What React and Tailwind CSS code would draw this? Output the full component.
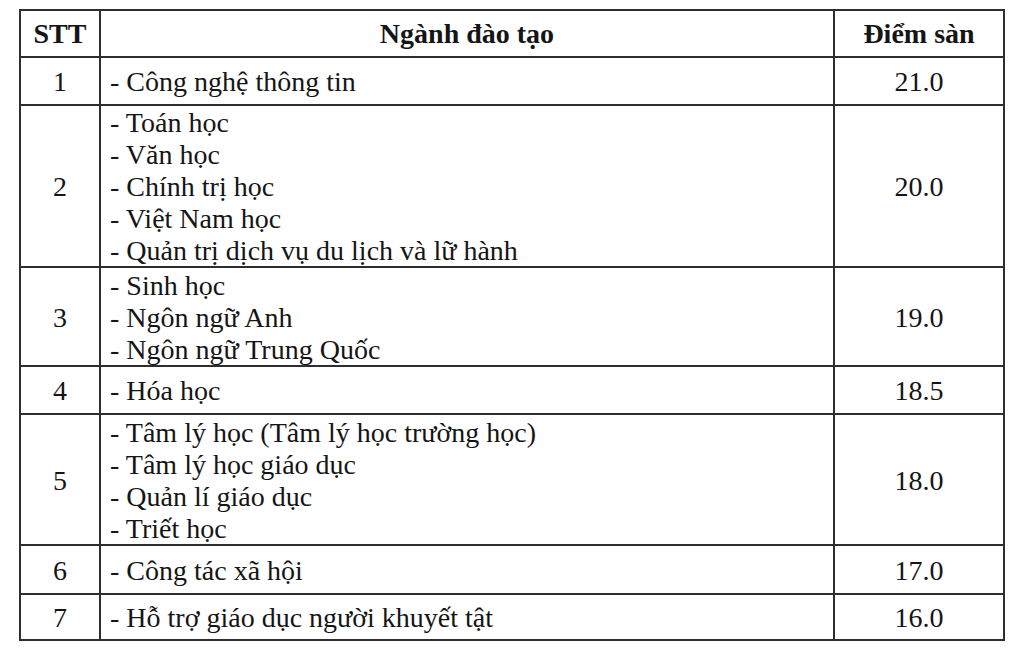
const rows = [
  { stt: "1", items: ["Công nghệ thông tin"], score: "21.0", h: "h-[48px]" },
  {
    stt: "2",
    items: ["Toán học", "Văn học", "Chính trị học", "Việt Nam học", "Quản trị dịch vụ du lịch và lữ hành"],
    score: "20.0",
    h: "h-[162px]",
  },
  { stt: "3", items: ["Sinh học", "Ngôn ngữ Anh", "Ngôn ngữ Trung Quốc"], score: "19.0", h: "h-[99px]" },
  { stt: "4", items: ["Hóa học"], score: "18.5", h: "h-[48px]" },
  {
    stt: "5",
    items: ["Tâm lý học (Tâm lý học trường học)", "Tâm lý học giáo dục", "Quản lí giáo dục", "Triết học"],
    score: "18.0",
    h: "h-[131px]",
  },
  { stt: "6", items: ["Công tác xã hội"], score: "17.0", h: "h-[49px]" },
  { stt: "7", items: ["Hỗ trợ giáo dục người khuyết tật"], score: "16.0", h: "h-[46px]" },
];

export default function App() {
  return (
    <div className="w-[1020px] h-[648px] bg-white pt-[9px] pl-[19px] font-[family-name:Liberation_Serif,serif] text-[28px] leading-[32px] text-[#151515]">
      <div className="w-[986px] border-2 border-[#2e2e2e]">
        {/* header */}
        <div className="flex h-[45px] font-bold">
          <div className="w-[78px] flex items-center justify-center">STT</div>
          <div className="w-[734px] border-l-2 border-[#2e2e2e] flex items-center justify-center">Ngành đào tạo</div>
          <div className="w-[170px] border-l-2 border-[#2e2e2e] flex items-center justify-center">Điểm sàn</div>
        </div>

        {rows.map((r) => (
          <div key={r.stt} className={`flex border-t-2 border-[#2e2e2e] ${r.h}`}>
            <div className="w-[78px] flex items-center justify-center pt-[2px]">{r.stt}</div>
            <div className="w-[734px] border-l-2 border-[#2e2e2e] flex flex-col justify-center pl-[9px] pt-[2px]">
              {r.items.map((it) => (
                <div key={it}>- {it}</div>
              ))}
            </div>
            <div className="w-[170px] border-l-2 border-[#2e2e2e] flex items-center justify-center pt-[2px]">{r.score}</div>
          </div>
        ))}
      </div>
    </div>
  );
}
